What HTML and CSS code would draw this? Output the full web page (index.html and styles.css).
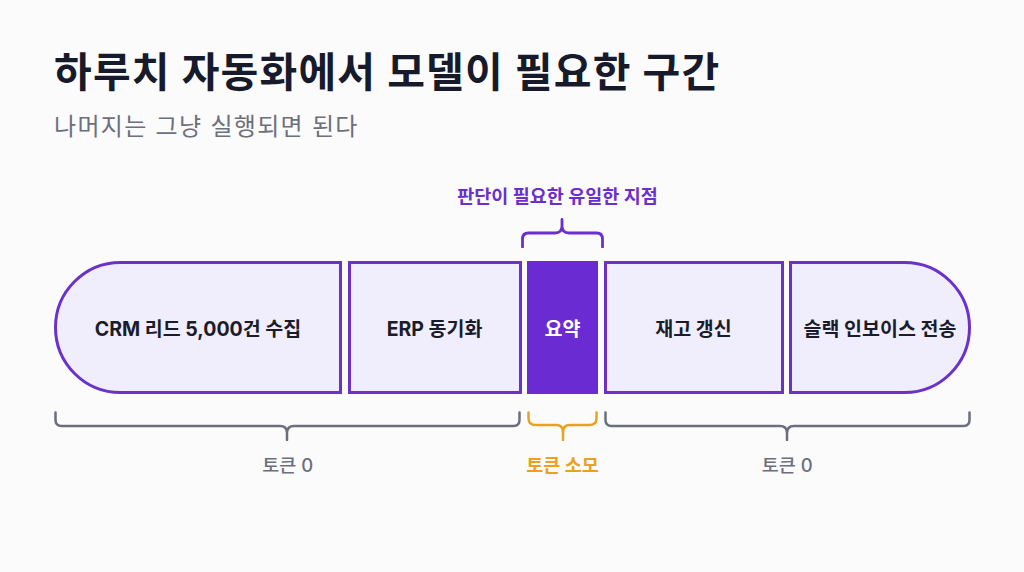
FILE: index.html
```html
<!DOCTYPE html>
<html lang="ko">
<head>
<meta charset="utf-8">
<title>하루치 자동화에서 모델이 필요한 구간</title>
<link rel="stylesheet" href="styles.css">
</head>
<body>
<main class="slide">
  <h1 class="title">하루치 자동화에서 모델이 필요한 구간</h1>
  <p class="subtitle">나머지는 그냥 실행되면 된다</p>

  <div class="diagram">
    <div class="top-label">판단이 필요한 유일한 지점</div>
    <svg class="brace brace-top" width="83" height="30" viewBox="0 0 83 30">
      <path d="M1.5,29 V21 Q1.5,15 7.5,15 H34 Q41,15 41,8 V1.5 M41,8 Q41,15 48,15 H75.5 Q81.5,15 81.5,21 V29"/>
    </svg>

    <div class="box box-start">CRM 리드 5,000건 수집</div>
    <div class="box">ERP 동기화</div>
    <div class="box box-key">요약</div>
    <div class="box">재고 갱신</div>
    <div class="box box-end">슬랙 인보이스 전송</div>

    <svg class="brace brace-left" width="467" height="30" viewBox="0 0 467 30">
      <path d="M1.5,1.5 V9 Q1.5,15 7.5,15 H226 Q233,15 233,22 V29 M233,22 Q233,15 240,15 H459.5 Q465.5,15 465.5,9 V1.5"/>
    </svg>
    <svg class="brace brace-mid" width="71" height="30" viewBox="0 0 71 30">
      <path d="M1.5,1.5 V7 Q1.5,14 8.5,14 H29 Q36,14 36,21 V29 M36,21 Q36,14 43,14 H62.5 Q69.5,14 69.5,7 V1.5"/>
    </svg>
    <svg class="brace brace-right" width="367" height="30" viewBox="0 0 367 30">
      <path d="M1.5,1.5 V9 Q1.5,15 7.5,15 H176 Q183,15 183,22 V29 M183,22 Q183,15 190,15 H359.5 Q365.5,15 365.5,9 V1.5"/>
    </svg>

    <div class="cost cost-left">토큰 0</div>
    <div class="cost cost-mid">토큰 소모</div>
    <div class="cost cost-right">토큰 0</div>
  </div>
</main>
</body>
</html>
```

FILE: styles.css
```css
html, body {
  margin: 0;
  padding: 0;
}

body {
  background: #fbfbfc;
  font-family: Inter, "Noto Sans CJK KR", "Noto Sans", sans-serif;
  color: #181a29;
}

.slide {
  width: 1024px;
  height: 572px;
  box-sizing: border-box;
  padding: 47px 0 0 54px;
}

.title {
  margin: 0;
  font-size: 41px;
  line-height: 50px;
  font-weight: 700;
  color: #171a2a;
  letter-spacing: 1.2px;
}

.subtitle {
  margin: 15px 0 0;
  font-size: 24px;
  line-height: 30px;
  font-weight: 400;
  color: #6c6f7c;
  letter-spacing: 1.3px;
}

.diagram {
  margin-top: 43px;
  display: grid;
  grid-template-columns: 288px 174px 71px 180px 182px;
  grid-template-rows: auto auto auto auto auto;
  column-gap: 5.5px;
}

.top-label {
  grid-column: 3;
  grid-row: 1;
  justify-self: center;
  margin-right: 10px;
  white-space: nowrap;
  font-size: 18.5px;
  line-height: 22px;
  font-weight: 700;
  color: #6a2fcc;
}

.brace {
  display: block;
  fill: none;
  stroke-width: 2.5;
  stroke-linecap: round;
  stroke-linejoin: round;
}

.brace-top {
  grid-column: 3;
  grid-row: 2;
  margin: 11px 0 0 -6px;
  stroke: #6a2fcc;
  stroke-width: 2.8;
}

.box {
  grid-row: 3;
  margin-top: 13px;
  box-sizing: border-box;
  height: 133px;
  border: 3px solid #6a31cb;
  background: #f0edfc;
  display: flex;
  align-items: center;
  justify-content: center;
  font-size: 19.5px;
  font-weight: 700;
  color: #1b1c2a;
  white-space: nowrap;
}

.box-start {
  border-radius: 67px 0 0 67px;
}

.box-end {
  border-radius: 0 67px 67px 0;
}

.box-key {
  background: #6a2bd2;
  border-color: #6a2bd2;
  color: #ffffff;
}

.diagram > .brace-left,
.diagram > .brace-mid,
.diagram > .brace-right {
  grid-row: 4;
  margin-top: 17px;
}

.brace-left {
  grid-column: 1 / 3;
  stroke: #6b6e7c;
}

.brace-mid {
  grid-column: 3;
  stroke: #e9a220;
}

.brace-right {
  grid-column: 4 / 6;
  stroke: #6b6e7c;
}

.cost {
  grid-row: 5;
  margin-top: 13px;
  text-align: center;
  font-size: 18.5px;
  line-height: 22px;
  font-weight: 500;
  color: #6b6e7c;
  white-space: nowrap;
}

.cost-left {
  grid-column: 1 / 3;
}

.cost-mid {
  grid-column: 3;
  justify-self: center;
  font-weight: 700;
  color: #e9a220;
}

.cost-right {
  grid-column: 4 / 6;
}
```
